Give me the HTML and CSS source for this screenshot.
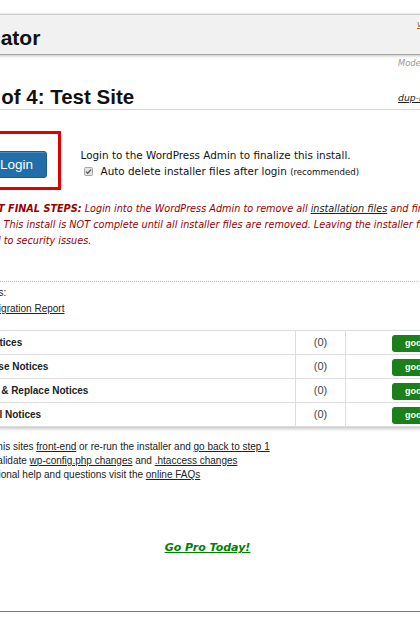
FILE: index.html
```html
<!DOCTYPE html>
<html lang="en">
<head>
  <meta charset="UTF-8">
  <meta name="viewport" content="width=device-width, initial-scale=1.0">
  <title>Duplicator - Step 4 of 4</title>
  <link rel="stylesheet" href="styles.css">
</head>
<body>
  <div class="frame">
    <div class="header">
      <h1>Duplicator</h1>
      <a class="version" href="#">version: 1.3.40</a>
    </div>

    <div class="content">
      <div class="meta">
        <span class="mode">Mode: Standard Install</span>
      </div>

      <div class="step">
        <h2>Step 4 of 4: Test Site</h2>
        <a class="log" href="#">dup-installer-log.txt</a>
      </div>

      <div class="login-row">
        <div class="login-box">
          <button class="btn-login">Login</button>
        </div>
        <div class="login-text">
          <p>Login to the WordPress Admin to finalize this install.</p>
          <label class="auto-delete">
            <svg class="chk" width="9" height="9" viewBox="0 0 9 9">
              <rect x="0.5" y="0.5" width="8" height="8" rx="1" fill="#e4e4e4" stroke="#a3a3a3"/>
              <path d="M2 4.6l1.7 1.7L7 2.6" fill="none" stroke="#555" stroke-width="1.3"/>
            </svg>
            <span>Auto delete installer files after login <small>(recommended)</small></span>
          </label>
        </div>
      </div>

      <p class="final-steps">
        <b>IMPORTANT FINAL STEPS:</b> Login into the WordPress Admin to remove all <u>installation files</u> and finalize<br>
        the process. This install is NOT complete until all installer files are removed. Leaving the installer files on this server is risky,<br>
        it could lead to security issues.
      </p>

      <div class="report">
        <div>Install Details:</div>
        <div>View your <a href="#">Migration Report</a></div>
      </div>

      <table class="notices">
        <tr>
          <td class="label">Site Notices</td>
          <td class="count">(0)</td>
          <td class="status"><span class="badge">good</span></td>
        </tr>
        <tr>
          <td class="label">Database Notices</td>
          <td class="count">(0)</td>
          <td class="status"><span class="badge">good</span></td>
        </tr>
        <tr>
          <td class="label">Search &amp; Replace Notices</td>
          <td class="count">(0)</td>
          <td class="status"><span class="badge">good</span></td>
        </tr>
        <tr>
          <td class="label">General Notices</td>
          <td class="count">(0)</td>
          <td class="status"><span class="badge">good</span></td>
        </tr>
      </table>

      <ul class="next-steps">
        <li>Review this sites <a href="#">front-end</a> or re-run the installer and <a href="#">go back to step 1</a></li>
        <li>Please validate <a href="#">wp-config.php changes</a> and <a href="#">.htaccess changes</a></li>
        <li>For additional help and questions visit the <a href="#">online FAQs</a></li>
      </ul>

      <div class="go-pro"><a href="#">Go Pro Today!</a></div>
    </div>
  </div>
</body>
</html>
```

FILE: styles.css
```css
html,
body {
  overflow: hidden;
}
body {
  margin: 0;
  background-color: #fff;
  color: #222;
  font-family: "Liberation Sans", Arial, sans-serif;
  font-size: 10px;
}
a {
  color: inherit;
}

/* outer installer frame, wider than the window */
.frame {
  box-sizing: border-box;
  width: 579px;
  margin: 14px 0 0 -82px;
  border: 1px solid #d2d2d2;
  border-bottom-color: #777;
  box-shadow: 0 2px 4px rgba(0, 0, 0, 0.55);
}
.header {
  display: flex;
  align-items: flex-start;
  height: 39px;
  padding: 0 15px 0 17.5px;
  background-color: #f1f1f1;
  border-bottom: 1px solid #a4a4a4;
  box-shadow: 0 1px 3px rgba(0, 0, 0, 0.22);
}
.header h1 {
  margin: 0;
  padding-top: 6px;
  font-size: 21px;
  line-height: 33px;
  color: #111;
}
.version {
  margin-left: auto;
  width: 64px;
  margin-top: 3px;
  font-family: "DejaVu Sans", sans-serif;
  font-style: italic;
  font-size: 8.5px;
  line-height: 12px;
  color: #b26b1f;
  white-space: nowrap;
}
.content {
  padding: 0 15px 55px;
}
.meta {
  display: flex;
  justify-content: flex-end;
  margin-top: 2px;
}
.mode {
  width: 83px;
  font-family: "DejaVu Sans", sans-serif;
  font-style: italic;
  font-size: 8.3px;
  line-height: 12px;
  color: #999;
  white-space: nowrap;
}
.step {
  display: flex;
  align-items: center;
  justify-content: space-between;
  margin-top: 16px;
  border-bottom: 1px solid #d9d9d9;
}
.step h2 {
  margin: 0;
  font-size: 20.5px;
  line-height: 24px;
  color: #111;
}
.log {
  width: 83px;
  font-family: "DejaVu Sans", sans-serif;
  font-style: italic;
  font-size: 9.3px;
  color: #222;
  white-space: nowrap;
}

/* login call to action */
.login-row {
  display: flex;
  align-items: flex-start;
  margin: 21px 0 0 38px;
}
.login-box {
  border: 3px solid #e50000;
  padding: 17px 11px 9px;
}
.btn-login {
  display: block;
  height: 27px;
  padding: 0 13px;
  font-family: "Liberation Sans", Arial, sans-serif;
  font-size: 13.5px;
  color: #fff;
  background-color: #216ea9;
  border: 1px solid #1a5c91;
  border-radius: 3px;
  box-shadow: inset 0 1px 0 rgba(255, 255, 255, 0.2);
  cursor: pointer;
}
.login-text {
  margin-left: 19.5px;
  padding-top: 16px;
  font-family: "DejaVu Sans", sans-serif;
  font-size: 10.4px;
  line-height: 16px;
  color: #111;
}
.login-text p {
  margin: 0;
}
.auto-delete {
  display: flex;
  align-items: center;
  gap: 8px;
  padding-left: 3px;
}
.chk {
  display: block;
}
.auto-delete small {
  font-size: 8.6px;
}
.final-steps {
  margin: 11px 0 0;
  padding-left: 7px;
  font-family: "DejaVu Sans", sans-serif;
  font-style: italic;
  font-size: 9.7px;
  line-height: 16px;
  color: #990000;
  white-space: nowrap;
}
.final-steps u {
  color: #222;
}

/* report + notices */
.report {
  margin-top: 32px;
  padding: 3px 0 0 10px;
  border-top: 1px dotted #c4c4c4;
  line-height: 16px;
}
.notices {
  width: 100%;
  margin-top: 13px;
  table-layout: fixed;
  border-collapse: separate;
  border-spacing: 0;
  border-top: 1px solid #ddd;
  box-shadow: 0 2px 3px rgba(0, 0, 0, 0.22);
}
.notices td {
  box-sizing: border-box;
  padding: 0;
  line-height: 23px;
  border-bottom: 1px solid #ddd;
}
.notices .label {
  width: 361px;
  padding-left: 31px;
  font-weight: bold;
  color: #222;
}
.notices .count {
  width: 50px;
  border-left: 1px solid #ddd;
  text-align: center;
  font-size: 11px;
  color: #444;
}
.notices .status {
  border-left: 1px solid #ddd;
  padding-left: 46px;
}
.badge {
  display: inline-block;
  vertical-align: middle;
  padding: 0 13px;
  line-height: 17px;
  border-radius: 3px;
  background-color: #1b7f1b;
  color: #fff;
  font-weight: bold;
  font-size: 9px;
}
.next-steps {
  margin: 13px 0 0;
  padding-left: 25px;
  list-style: none;
  line-height: 14px;
}
.go-pro {
  margin-top: 58px;
  text-align: center;
  font-family: "DejaVu Sans", sans-serif;
  font-style: italic;
  font-weight: bold;
  font-size: 11px;
  line-height: 16px;
}
.go-pro a {
  color: #008000;
}
```
